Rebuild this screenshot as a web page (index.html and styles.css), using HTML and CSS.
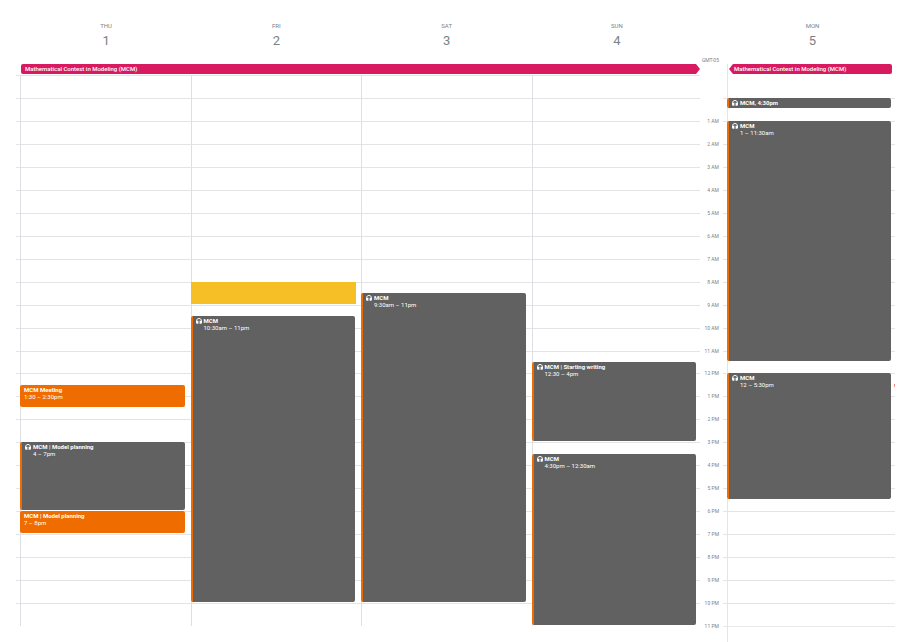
FILE: index.html
```
<!DOCTYPE html>
<html lang="en">
<head>
<meta charset="utf-8">
<title>Calendar</title>
<link rel="stylesheet" href="styles.css">
</head>
<body>
<svg class="symbols" aria-hidden="true">
  <symbol id="headset" viewBox="0 0 12 12">
    <path d="M1.200 9V5.500C1.200 2.800 3.200 1 6 1s4.800 1.800 4.800 4.500V9" fill="none" stroke="currentColor" stroke-width="2"/>
    <path d="M.2 5.500h4.600v6H2A1.800 1.800 0 0 1 .2 9.700zM7.200 5.500h4.600v4.200A1.800 1.800 0 0 1 10 11.500H7.200z" fill="currentColor"/>
  </symbol>
</svg>
<main class="calendar">
  <header class="days week-days">
    <h2 class="day"><span class="name">THU</span><span class="date">1</span></h2>
    <h2 class="day"><span class="name">FRI</span><span class="date">2</span></h2>
    <h2 class="day"><span class="name">SAT</span><span class="date">3</span></h2>
    <h2 class="day"><span class="name">SUN</span><span class="date">4</span></h2>
  </header>
  <div class="zone">GMT-05</div>
  <header class="days">
    <h2 class="day"><span class="name">MON</span><span class="date">5</span></h2>
  </header>

  <div class="allday week-allday"><div class="banner ends-later">Mathematical Contest in Modeling (MCM)</div></div>
  <div class="allday monday-allday"><div class="banner began-before">Mathematical Contest in Modeling (MCM)</div></div>

  <section class="board week">
    <div class="lines"><i></i><i></i><i></i><i></i><i></i><i></i><i></i><i></i><i></i><i></i><i></i><i></i><i></i><i></i><i></i><i></i><i></i><i></i><i></i><i></i><i></i><i></i><i></i><i></i></div>
    <div class="column">
      <article class="event orange from-1330 to-1430"><div><h3>MCM Meeting</h3><p>1:30 – 2:30pm</p></div></article>
      <article class="event gray from-1600 to-1900"><svg><use href="#headset"/></svg><div><h3>MCM | Model planning</h3><p>4 – 7pm</p></div></article>
      <article class="event orange from-1900 to-2000"><div><h3>MCM | Model planning</h3><p>7 – 8pm</p></div></article>
    </div>
    <div class="column">
      <article class="event yellow from-0900 to-1000"></article>
      <article class="event gray from-1030 to-2300"><svg><use href="#headset"/></svg><div><h3>MCM</h3><p>10:30am – 11pm</p></div></article>
    </div>
    <div class="column">
      <article class="event gray from-0930 to-2300"><svg><use href="#headset"/></svg><div><h3>MCM</h3><p>9:30am – 11pm</p></div></article>
    </div>
    <div class="column">
      <article class="event gray from-1230 to-1600"><svg><use href="#headset"/></svg><div><h3>MCM | Starting writing</h3><p>12:30 – 4pm</p></div></article>
      <article class="event gray from-1630 to-2400"><svg><use href="#headset"/></svg><div><h3>MCM</h3><p>4:30pm – 12:30am</p></div></article>
    </div>
  </section>

  <div class="hours">
    <span></span><span></span><span>1 AM</span><span>2 AM</span><span>3 AM</span><span>4 AM</span><span>5 AM</span><span>6 AM</span><span>7 AM</span><span>8 AM</span><span>9 AM</span><span>10 AM</span><span>11 AM</span><span>12 PM</span><span>1 PM</span><span>2 PM</span><span>3 PM</span><span>4 PM</span><span>5 PM</span><span>6 PM</span><span>7 PM</span><span>8 PM</span><span>9 PM</span><span>10 PM</span><span>11 PM</span>
  </div>

  <section class="board monday">
    <div class="lines"><b></b><i></i><i></i><i></i><i></i><i></i><i></i><i></i><i></i><i></i><i></i><i></i><i></i><i></i><i></i><i></i><i></i><i></i><i></i><i></i><i></i><i></i><i></i><i></i></div>
    <div class="column">
      <article class="event gray from-0100 to-0130"><svg><use href="#headset"/></svg><div><h3>MCM, 4:30pm</h3></div></article>
      <article class="event gray from-0200 to-1230"><svg><use href="#headset"/></svg><div><h3>MCM</h3><p>1 – 11:30am</p></div></article>
      <article class="event gray from-1300 to-1830"><svg><use href="#headset"/></svg><div><h3>MCM</h3><p>12 – 5:30pm</p></div></article>
    </div>
    <span class="now"></span>
  </section>
</main>
</body>
</html>
```
FILE: styles.css
```
* { box-sizing: border-box; }
body { margin: 0; background: #fff; color: #7c8186; font-family: Roboto, "Liberation Sans", sans-serif; }
h2, h3, p { margin: 0; font: inherit; }
.symbols { position: absolute; width: 0; height: 0; }

.calendar {
  display: grid;
  grid-template-columns: 684fr 23px 175fr;
  grid-template-rows: 64px 11px minmax(480px, 1fr);
  height: 100vh;
  min-height: 571px;
  padding: 0 13px 16px 16px;
  overflow: hidden;
}

/* Day headings */
.days { display: flex; padding-left: 4px; }
.week-days { padding-left: 5px; margin-right: -2px; }
.day { flex: 1; display: flex; flex-direction: column; align-items: center; padding-top: 22px; }
.name { font-size: 6px; line-height: 8px; }
.date { font-size: 13px; line-height: 22px; }
.zone { align-self: end; justify-self: end; font-size: 5px; line-height: 8px; margin-right: 4px; }

/* All-day row */
.allday { padding-left: 5px; }
.monday-allday { grid-column: 3; padding: 0 6px; }
.banner {
  height: 10px;
  padding-left: 4px;
  border-radius: 2px;
  background: #d81b60;
  color: #fff;
  font-size: 6px;
  line-height: 10px;
  font-weight: 500;
  white-space: nowrap;
}
.ends-later { clip-path: polygon(0 0, calc(100% - 4px) 0, 100% 50%, calc(100% - 4px) 100%, 0 100%); }
.began-before { clip-path: polygon(4px 0, 100% 0, 100% 100%, 4px 100%, 0 50%); padding-left: 5px; }

/* Hour grid */
.board { position: relative; display: flex; padding-left: 4px; }
.week { margin-right: -2px; }
.lines { position: absolute; inset: 0; display: grid; grid-template-rows: repeat(24, 1fr); }
.lines i { border-top: 1px solid #e3e4e7; }
.week .lines { right: 2px; }
.monday .lines { right: 3px; border-bottom: 1px solid #e8e9eb; bottom: -1px; }
.column {
  position: relative;
  flex: 1;
  display: grid;
  grid-template-columns: minmax(0, 1fr);
  grid-template-rows: repeat(48, minmax(0, 1fr));
  padding-right: 6px;
  border-left: 1px solid #dddfe5;
}
.monday .column { border-color: transparent; padding-right: 7px; }
.monday .column::before { content: ""; position: absolute; left: -1px; top: -11px; bottom: -16px; border-left: 1px solid #e3e4e7; }

.hours { display: grid; grid-template-rows: repeat(24, minmax(0, 1fr)) 0; justify-items: end; padding-right: 4px; font-size: 5px; line-height: 8px; }
.hours span { height: 8px; margin-top: -4px; white-space: nowrap; }

/* Events */
.event {
  position: relative;
  display: flex;
  gap: 2px;
  margin: 0 0 1px -1px;
  padding: 1px 0 0 4px;
  border-radius: 2px;
  color: #fff;
  font-size: 6px;
  line-height: 7px;
  white-space: nowrap;
  overflow: hidden;
}
.event h3 { font-weight: 700; }
.event svg { width: 6px; height: 6px; margin-top: 1px; }
.gray { background: #616161; border-left: 2px solid #ef6c00; padding-left: 3px; }
.orange { background: #ef6c00; }
.yellow { background: #f6bf26; border-radius: 0; margin-right: -1px; }
.now { position: absolute; right: 3px; top: 56%; width: 1px; height: 3px; background: #f28b82; }

.from-0100 { grid-row-start: 3; }
.from-0200 { grid-row-start: 5; }
.from-0900 { grid-row-start: 19; }
.from-0930 { grid-row-start: 20; }
.from-1030 { grid-row-start: 22; }
.from-1230 { grid-row-start: 26; }
.from-1300 { grid-row-start: 27; }
.from-1330 { grid-row-start: 28; }
.from-1600 { grid-row-start: 33; }
.from-1630 { grid-row-start: 34; }
.from-1900 { grid-row-start: 39; }
.to-0130 { grid-row-end: 4; }
.to-1000 { grid-row-end: 21; }
.to-1230 { grid-row-end: 26; }
.to-1430 { grid-row-end: 30; }
.to-1600 { grid-row-end: 33; }
.to-1830 { grid-row-end: 38; }
.to-1900 { grid-row-end: 39; }
.to-2000 { grid-row-end: 41; }
.to-2300 { grid-row-end: 47; }
.to-2400 { grid-row-end: 49; }
```
